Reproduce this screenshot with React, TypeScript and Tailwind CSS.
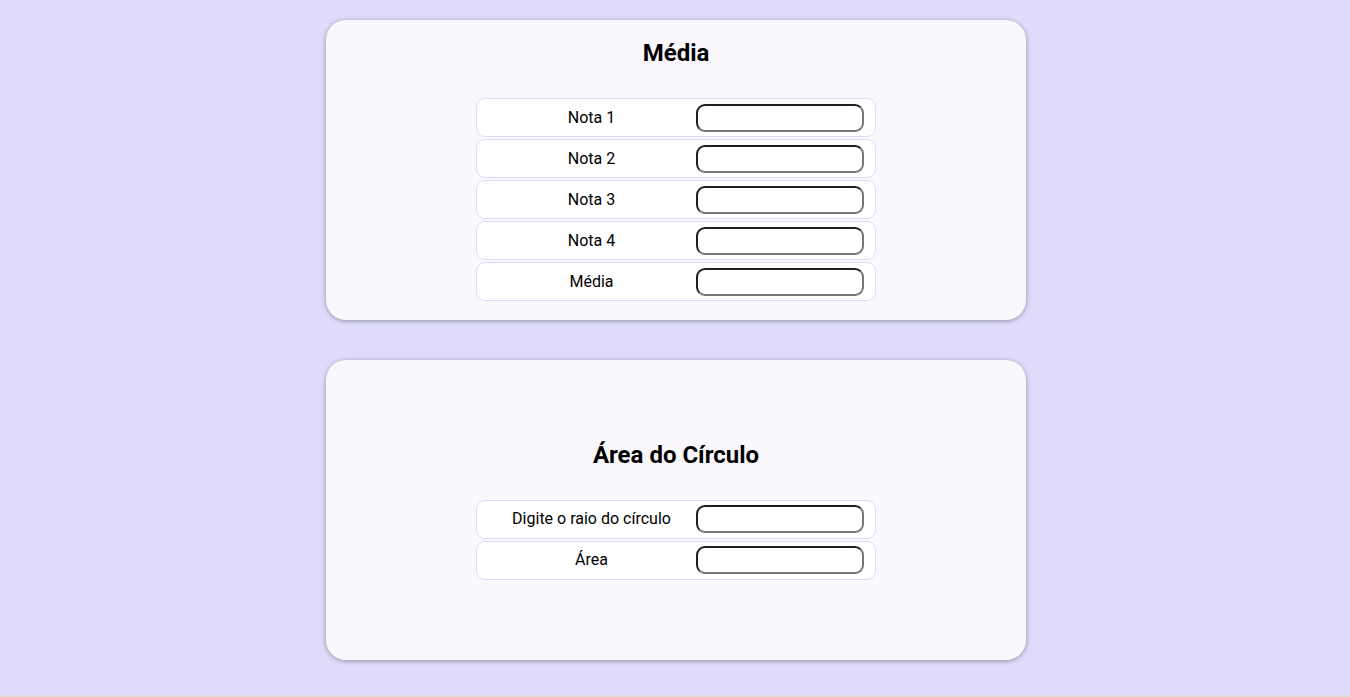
import React from "react";

function Row({ label }: { label: string }) {
  return (
    <div className="flex items-center w-[400px] h-[39px] bg-white border border-[#dedcfa] rounded-[9px]">
      <div className="w-[229px] text-center text-[16px] text-black leading-5">{label}</div>
      <input
        type="text"
        className="ml-[-10px] w-[168px] h-[28px] rounded-[9px] border-2 border-t-[#1f1f1f] border-l-[#1f1f1f] border-b-[#767676] border-r-[#767676] bg-white outline-none"
      />
    </div>
  );
}

function Card({ title, rows }: { title: string; rows: string[] }) {
  return (
    <div className="w-[700px] h-[300px] rounded-[20px] bg-[#faf8fc] shadow-[0_1px_5px_rgba(0,0,0,0.35)] flex flex-col items-center justify-center">
      <h2 className="text-[24px] leading-[28px] font-bold text-black mb-[31px]">{title}</h2>
      <div className="flex flex-col gap-[2px]">
        {rows.map((r) => (
          <Row key={r} label={r} />
        ))}
      </div>
    </div>
  );
}

export default function App() {
  return (
    <div className="font-['Roboto',sans-serif]">
      <div className="h-[695px] bg-[#dedcfa] flex flex-col items-center pt-[20px] pl-[2px] gap-[40px]">
        <Card title="Média" rows={["Nota 1", "Nota 2", "Nota 3", "Nota 4", "Média"]} />
        <Card title="Área do Círculo" rows={["Digite o raio do círculo", "Área"]} />
      </div>
      <div className="h-[2px] bg-[#dcdcdc]" />
    </div>
  );
}
